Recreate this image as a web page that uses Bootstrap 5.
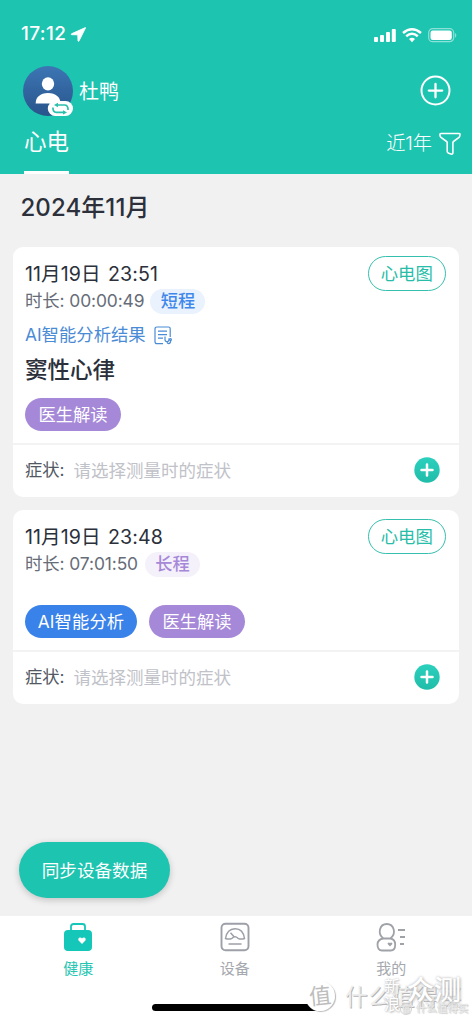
<!DOCTYPE html>
<html lang="zh-CN">
<head>
<meta charset="utf-8">
<meta name="viewport" content="width=device-width, initial-scale=1">
<title>心电</title>
<link href="https://cdn.jsdelivr.net/npm/bootstrap@5.3.0/dist/css/bootstrap.min.css" rel="stylesheet">
<style>
:root{--teal:#1dc4b0}
body{font-family:Inter,"Noto Sans CJK SC",sans-serif;background:#f1f1f1;color:#2b303b;height:1022px;overflow:hidden;position:relative;line-height:1.2;white-space:nowrap}
svg{display:block;flex:none}
.top-area{background:var(--teal);height:173.5px;color:#fff}
.status{height:69px;padding:0 14px 0 21px}
.clock{font-size:19px;font-weight:500;letter-spacing:.35px}
.user-row{height:43px;padding:0 21px 0 23px}
.avatar{width:50px;height:50px}
.nick{font-size:20px;margin-left:6px;padding-top:2px}
.tab-row{height:61.5px;padding:0 11px 0 24px}
.tab-on{font-size:22.5px;height:61.5px;width:45px;padding-top:16px;border-bottom:3px solid #fff}
.range{font-size:19.3px;font-weight:300;letter-spacing:-.1px;padding-top:12px;height:51px}
.month{font-size:24px;font-weight:500;letter-spacing:.08px;height:73.5px;padding:20px 0 0 20.5px}
.rec{width:446px;margin:0 0 13px 12.5px;background:#fff;border-radius:10px}
.rec-main{padding:12px 12.5px 0}
.long-rec .rec-main{height:140px}
.short-rec .rec-main{height:196px}
.date{font-size:19.6px;height:29px;line-height:30px;letter-spacing:.05px;word-spacing:2px}
.dur{font-size:17.4px;height:25px;color:#666c78;letter-spacing:-.1px;margin-top:.5px}
.tag{font-size:17.2px;width:55px;height:25px;border-radius:13px;font-weight:500;letter-spacing:0;padding-top:1px}
.tag-s{background:#eaf2fe;color:#3f87ea;margin-left:6px}
.tag-l{background:#f5f1fb;color:#a688d8;margin-left:7px}
.ecg{width:78.5px;height:35.5px;border:1.5px solid #35bfae;color:#28bda9;border-radius:18px;font-size:17.4px;margin-top:-3.5px;padding-top:2px}
.ai{font-size:17.35px;color:#4a8bd6;height:30px;margin-top:7px}
.result{font-size:22.5px;font-weight:500;height:38px}
.pill{height:32.5px;border-radius:17px;color:#fff;font-size:17.3px;padding-top:2px}
.short-rec .pill{margin-top:9.5px}
.violet{background:#a688d8;width:96px}
.blue{background:#3982ea;width:112px;letter-spacing:.15px}
.symp{border-top:2px solid #f3f3f3;height:54px;padding:0 18.5px 2px 12.5px;font-size:17.3px;color:#515864}
.symp>span{padding-top:1px}
.hint{color:#bfc2c8;font-size:17.5px;margin-left:9px}
.sync{position:absolute;left:19px;top:842px;width:151px;height:56px;padding-top:2px;border-radius:28px;background:var(--teal);color:#fff;font-size:17.6px;box-shadow:0 2px 7px #0003}
.tabbar{position:absolute;left:0;right:0;bottom:0;height:106px;background:#fff;font-size:15px;color:#a5a8ae}
.tabbar .item{width:156.5px;padding-top:6px}
.item svg{margin-bottom:7.5px}
.item.on{color:#25c5b2}
.homebar{position:absolute;left:152px;top:1004px;width:168px;height:7px;border-radius:4px;background:#000}
.wm{position:absolute;line-height:1;color:#fff}
.wm-disc{left:305px;top:981px;width:30px;height:30px;border-radius:50%;background:#fff;color:#bdbdbd;font-size:22px;box-shadow:1px 1px 1px #bbb;transform:rotate(-6deg)}
.wm-name{left:345px;top:986px;font-size:22.5px;letter-spacing:1px;color:#eee;text-shadow:1px 1px 0 #b5b5b5}
.wm-sina{left:384px;top:977px;font-size:16px;line-height:18px;width:17px;white-space:normal;text-shadow:0 0 2px #bbb,1px 1px 2px #bbb}
.wm-test{left:407px;top:977px;font-size:27px;font-weight:500;letter-spacing:0;text-shadow:0 0 3px #bbb,1px 1px 3px #bbb}
.wm-small{left:400px;top:1003px;font-size:10.5px;color:#eee;text-shadow:0 0 1px #bbb,1px 1px 1px #ccc}
.wm-ring{width:12px;height:12px;border:1px solid #d4d4d4;border-radius:50%;font-size:8px}
</style>
</head>
<body>
<header class="top-area">
  <div class="status d-flex align-items-center justify-content-between">
    <div class="d-flex align-items-center"><span class="clock">17:12</span>
      <svg style="margin-left:4px" width="17" height="17" viewBox="0 0 17 17"><path fill="#fff" stroke="#fff" stroke-width=".9" stroke-linejoin="round" d="M15.400 1.600 1.500 7.800q-.8.6.3.9l6 .1.200 6q.4 1 1 .1l6.500-13Z"/></svg></div>
    <svg width="86" height="18" viewBox="0 0 86 18"><g fill="#fff"><rect x="2" y="11" width="4" height="5" rx="1"/><rect x="8" y="9" width="4" height="7" rx="1"/><rect x="14" y="6" width="4" height="10" rx="1"/><rect x="19.8" y="3" width="4" height="13" rx="1"/></g><g fill="none" stroke="#fff" stroke-width="2.5"><path d="M31 7q9-7.5 18 0M34.2 10.2q5.8-5 11.600 0"/></g><path fill="#fff" d="m37 13q3-2.600 6 0l-3 3.200Z"/><rect x="56.7" y="2.7" width="25" height="13" rx="4" fill="none" stroke="#8de1d7" stroke-width="1.2"/><rect x="58.5" y="4.5" width="21.3" height="9.4" rx="2.2" fill="#fff"/><path d="M83 7q2.600 2 0 5Z" fill="#8de1d7"/></svg>
  </div>
  <div class="user-row d-flex align-items-center">
    <svg class="avatar" viewBox="0 0 50 50"><defs><linearGradient id="av" x2="0" y2="1"><stop stop-color="#3c76b4"/><stop offset="1" stop-color="#28548b"/></linearGradient></defs><circle cx="25" cy="25" r="25" fill="url(#av)"/><ellipse cx="25" cy="17.8" rx="6.2" ry="6.6" fill="#fff"/><path fill="#fff" d="M12.600 37.500q.4-10 12.400-10.500 12 .5 12.600 10.500Z"/><rect x="24.8" y="35" width="25.2" height="15" rx="7.5" fill="#fff"/><g fill="none" stroke="#2bbfac" stroke-width="1.700"><path d="M33 39h8.500q3.600 0 3.600 5M42 46.400h-8.800q-3.300 0-3.300-4.800"/></g><path fill="#2bbfac" d="m31 39 4-2.200v4.400ZM44 46.400 40 44.200v4.400Z"/></svg>
    <span class="nick">杜鸭</span>
    <svg class="ms-auto" width="31" height="31" viewBox="0 0 31 31" fill="none" stroke="#fff" stroke-width="2"><circle cx="15.5" cy="15.5" r="14"/><path stroke-width="2.3" stroke-linecap="round" d="M15.500 9v13.300M8.800 15.600h13.400"/></svg>
  </div>
  <div class="tab-row d-flex justify-content-between">
    <div class="tab-on">心电</div>
    <div class="range d-flex align-items-center">近1年<svg style="margin-left:7px" width="22" height="24" viewBox="0 0 22 24" fill="none" stroke="#fff" stroke-width="1.6" stroke-linejoin="round"><path d="M2 1.500h18q1.200 0 1 1.300-.2 1.800-1 2.500l-5.500 4.200q-.6.4-.6 1.200v9.800q0 2-1.800 1.600l-2.400-.8q-1.500-.5-1.500-2v-8.500q0-.9-.6-1.300L2 5.300Q1 4.500.9 2.600.8 1.500 2 1.500Z"/></svg></div>
  </div>
</header>
<main>
  <div class="month">2024年11月</div>
  <section class="rec short-rec">
    <div class="rec-main">
      <div class="d-flex justify-content-between"><div>
        <div class="date">11月19日 23:51</div>
        <div class="dur d-flex align-items-center">时长: 00:00:49<span class="tag tag-s d-flex align-items-center justify-content-center">短程</span></div></div>
        <div class="ecg d-flex align-items-center justify-content-center">心电图</div></div>
      <div class="ai d-flex align-items-center">AI智能分析结果<svg style="margin-left:8px" width="18" height="19" viewBox="0 0 18 19" fill="none" stroke="#4a8bd6" stroke-width="1.2"><path d="M9 17.700H3Q1 17.700 1 15.800V3Q1 1 3 1h11.500q1.700 0 1.700 1.800V11M4 5.200h9M4 8.700h9M4 12.200h5M11 10.500v3q0 2.100 2 2.100t2-2.100v-1.300M13 15.600q0 2 1.600 2 2.100 0 2.100-3"/><circle cx="16.5" cy="13.6" r=".9"/></svg></div>
      <div class="result d-flex align-items-center">窦性心律</div>
      <div class="pill violet d-flex align-items-center justify-content-center">医生解读</div>
    </div>
    <div class="symp d-flex align-items-center"><span>症状:</span><span class="hint">请选择测量时的症状</span>
      <svg class="ms-auto" width="26" height="26" viewBox="0 0 26 26"><defs><linearGradient id="pg" x2="0" y2="1"><stop stop-color="#2bd0bd"/><stop offset="1" stop-color="#20bda9"/></linearGradient></defs><circle cx="13" cy="13" r="12.7" fill="url(#pg)"/><path d="M13 7.500v11M7.500 13h11" stroke="#fff" stroke-width="2.5" stroke-linecap="round"/></svg></div>
  </section>
  <section class="rec long-rec">
    <div class="rec-main">
      <div class="d-flex justify-content-between"><div>
        <div class="date">11月19日 23:48</div>
        <div class="dur d-flex align-items-center">时长: 07:01:50<span class="tag tag-l d-flex align-items-center justify-content-center">长程</span></div></div>
        <div class="ecg d-flex align-items-center justify-content-center">心电图</div></div>
      <div class="d-flex" style="gap:12px;margin-top:28.5px"><div class="pill blue d-flex align-items-center justify-content-center">AI智能分析</div><div class="pill violet d-flex align-items-center justify-content-center">医生解读</div></div>
    </div>
    <div class="symp d-flex align-items-center"><span>症状:</span><span class="hint">请选择测量时的症状</span>
      <svg class="ms-auto" width="26" height="26" viewBox="0 0 26 26"><circle cx="13" cy="13" r="12.7" fill="url(#pg)"/><path d="M13 7.500v11M7.500 13h11" stroke="#fff" stroke-width="2.5" stroke-linecap="round"/></svg></div>
  </section>
</main>
<div class="sync d-flex align-items-center justify-content-center">同步设备数据</div>
<nav class="tabbar d-flex">
  <div class="item on d-flex flex-column align-items-center"><svg width="30" height="30" viewBox="0 0 30 30"><path d="M8 9V4.500Q8 2 10.500 2h9Q22 2 22 4.500V9" fill="none" stroke="#15c7b8" stroke-width="1.8"/><rect x="1" y="8" width="28" height="21" rx="4" fill="#15c7b8"/><path fill="#fff" d="m19 22-3.200-3.200c-1.700-2.300 1.400-4.600 3.200-2.300 1.800-2.300 4.900 0 3.200 2.300Z"/></svg><span>健康</span></div>
  <div class="item d-flex flex-column align-items-center"><svg width="30" height="30" viewBox="0 0 30 30" fill="none" stroke="#9da0a8" stroke-width="1.500"><rect x="1.500" y="1.800" width="27" height="26.500" rx="4" stroke-width="1.900"/><path d="M5.500 16.500Q7 7 15 6.800t9.500 9.700q-3.500 1.300-6.500-.2-3-3-6 0-3 1.500-6.500.2ZM10.500 10.800l4 4.500M8.500 22h13"/></svg><span>设备</span></div>
  <div class="item d-flex flex-column align-items-center"><svg width="30" height="30" viewBox="0 0 30 30" fill="none" stroke="#9fa2a7" stroke-width="1.800"><path d="M7.500 16.500C1 12 3.500 2 10.800 2s10 10 3.400 14.500M7.500 16.500h6.700q5 .8 5 6 0 6-4.500 6H6q-4.500 0-4.500-6 0-5.200 6-6ZM22 8h7M24 15h5M24 22h4"/><path fill="#9fa2a7" stroke="none" d="m14 24.500-2.200-2.200c-.8-1.500 1.200-2.600 2.200-1.200 1-1.400 3-.3 2.200 1.200Z"/></svg><span>我的</span></div>
</nav>
<div class="homebar"></div>
<div class="wm wm-disc d-flex align-items-center justify-content-center">值</div>
<div class="wm wm-name">什么值得买</div>
<div class="wm wm-small d-flex align-items-center"><span class="wm-ring d-flex align-items-center justify-content-center me-1">值</span>什么值得买</div>
<div class="wm wm-sina">新浪</div>
<div class="wm wm-test">众测</div>
<script src="https://cdn.jsdelivr.net/npm/bootstrap@5.3.0/dist/js/bootstrap.bundle.min.js"></script>
</body>
</html>
